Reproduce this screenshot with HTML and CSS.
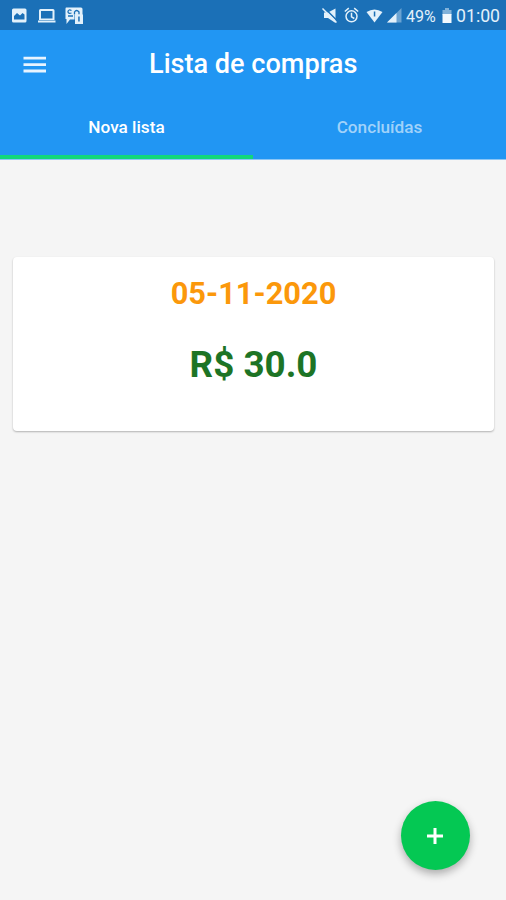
FILE: index.html
```
<!DOCTYPE html>
<html lang="pt-BR">
<head>
<meta charset="utf-8">
<title>Lista de compras</title>
<link rel="stylesheet" href="styles.css">
</head>
<body>
<div class="status">
  <svg class="status-icons" width="84" height="30" viewBox="0 0 84 30" fill="#e3f1fb">
    <path fill-rule="evenodd" d="M13.500 8.500h11.500q1.500 0 1.500 1.500v11q0 1.500-1.500 1.500h-11.500q-1.500 0-1.500-1.500v-11q0-1.500 1.500-1.500zM14 19.500h10.500v-5l-2-1.500-2.500 2.500-3-2.500-3 3z"/>
    <path fill-rule="evenodd" d="M40.500 9h12.500q1.500 0 1.500 1.500v9.500h-15.500v-9.500q0-1.500 1.500-1.500zM41 11v7.500h11.500v-7.500zM38 20.500h17.500v2h-17.500z"/>
    <path d="M66 7.500h15q1.500 0 1.500 1.500v6h-8v4.500h-4.500l-3.500 4.500v-5h-1v-10q0-1.500.5-1.500z"/>
    <g fill="none" stroke="#1c70b6" stroke-width="1.300"><path d="M71.500 10.500q-3-1.500-3.500 1 0 2.500 3.500 1.500M74.500 14.500v-2.500q2-3 4.500 0v2.500M68 16h5"/></g>
    <path d="M75 14.500h8v9.500h-8z"/><path d="M78.200 16.500h1.500v5h-1.500z" fill="#1c70b6"/>
  </svg>
  <div class="status-right">
    <svg width="82" height="30" viewBox="321 0 82 30" fill="#e3f1fb">
      <path d="M324 12.500h4l7.500-4v14.500l-7.500-5h-4z"/><path d="M323.500 7l14.500 14.500" stroke="#1c70b6" stroke-width="1.500"/><path d="M322.500 8.500l14 14" stroke="#e3f1fb" stroke-width="1.500"/>
      <g fill="none" stroke="#e3f1fb" stroke-width="1.500"><circle cx="351.500" cy="16.300" r="5.500"/><path d="M344.800 11.500l4-3.300M358.200 11.500l-4-3.300M351.500 12.800v4l2.800 1.700"/></g>
      <path d="M366.500 12q8-5 16 0l-8 10.500z"/><path d="M373.800 11.500h1.500v5h-1.500z" fill="#1c70b6"/>
      <path d="M401.500 8v14.500h-14.500z" opacity=".4"/><path d="M396.500 13v9.500h-9.500z"/>
    </svg>
    <span class="battery-text">49%</span>
    <svg class="battery" width="10" height="30" viewBox="0 0 10 30"><path d="M3 8h4v2h2.500v5H.5v-5H3z" fill="#81b2da"/><path d="M.5 14h9v9h-9z" fill="#f2f9fe"/></svg>
    <span class="clock">01:00</span>
  </div>
</div>
<header>
  <div class="toolbar">
    <svg class="menu" width="24" height="18" viewBox="0 0 24 18" fill="#e8f4ff"><path d="M.5 .8h22.500v2.800H.5zM.5 7.200h22.500v2.800H.5zM.5 13.600h22.500v2.800H.5z"/></svg>
    <h1>Lista de compras</h1>
  </div>
  <nav><a class="tab active">Nova lista</a><a class="tab">Concluídas</a></nav>
</header>
<main>
  <section class="card">
    <div class="date">05-11-2020</div>
    <div class="price">R$ 30.0</div>
  </section>
</main>
<button class="fab" aria-label="Adicionar"><svg width="18" height="18" viewBox="0 0 18 18"><path d="M9 1v16M1 9h16" stroke="#fff" stroke-width="3"/></svg></button>
</body>
</html>
```
FILE: styles.css
```
* { box-sizing: border-box; }
body {
  margin: 0;
  width: 506px;
  height: 900px;
  display: flex;
  flex-direction: column;
  overflow: hidden;
  background: #f5f5f5;
  font-family: Roboto, sans-serif;
}
.status {
  height: 30px;
  background: #1b70b7;
  color: #e3f1fb;
  display: flex;
  justify-content: space-between;
  line-height: 33px;
}
.status svg { display: block; flex: none; }
.status-right { display: flex; width: 185px; }
.battery-text { width: 36px; margin-left: 3px; font-size: 16px; }
.battery { margin-right: 4px; }
.clock { font-size: 17.700px; white-space: nowrap; }
header {
  height: 130px;
  background: #2196f3;
  color: #fff;
  border-bottom: 1px solid #8cc6f5;
}
.toolbar {
  height: 67px;
  display: flex;
  align-items: center;
  padding-left: 23px;
}
.menu { flex: none; margin-top: 2px; }
h1 {
  margin: 0 0 0 102px;
  font-size: 27.100px;
  font-weight: 500;
  line-height: 32px;
  white-space: nowrap;
}
nav { display: flex; height: 62px; }
.tab {
  flex: 1;
  padding-top: 20px;
  text-align: center;
  font-size: 17.200px;
  font-weight: 500;
  line-height: 20px;
  color: #a0d2fa;
}
.active {
  color: #fff;
  border-bottom: 4px solid #12d77b;
}
main { flex: 1; padding: 97px 12px 0 13px; }
.card {
  height: 174px;
  padding-top: 19px;
  border-radius: 4px;
  background: #fff;
  box-shadow: 0 1px 2px rgba(0, 0, 0, .28);
  text-align: center;
  font-weight: 700;
}
.date { font-size: 30.800px; line-height: 36px; color: #fb980b; }
.price { margin-top: 31px; font-size: 36.800px; line-height: 44px; color: #1d7425; }
.fab {
  position: absolute;
  left: 401px;
  top: 801px;
  width: 69px;
  height: 69px;
  padding: 0 1px 0 0;
  border: 0;
  border-radius: 50%;
  background: #04c853;
  display: flex;
  align-items: center;
  justify-content: center;
  box-shadow: 0 4px 8px rgba(0, 0, 0, .3);
}
```
